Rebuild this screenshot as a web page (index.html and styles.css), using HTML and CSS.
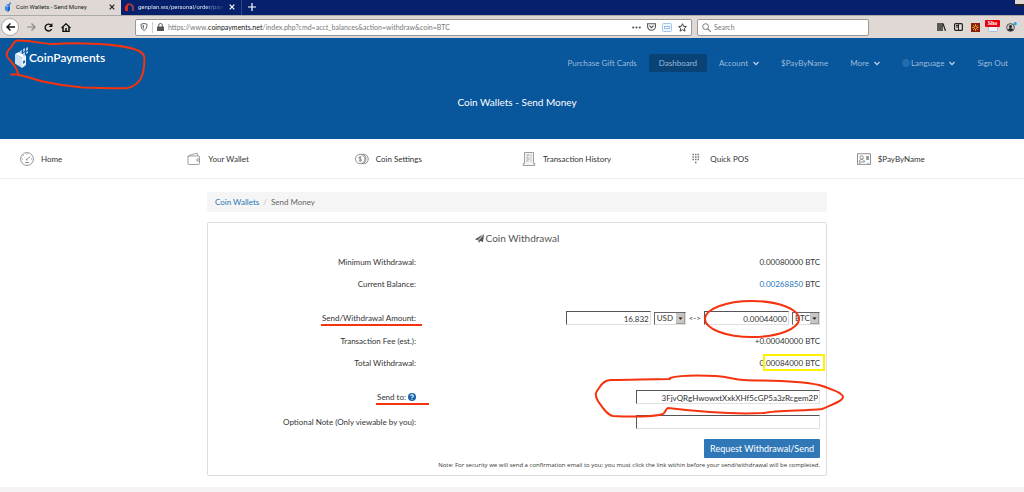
FILE: index.html
```
<!DOCTYPE html>
<html lang="en">
<head>
<meta charset="utf-8">
<title>Coin Wallets - Send Money</title>
<link rel="stylesheet" href="styles.css">
</head>
<body>
<div class="tabs">
  <div class="tab tab-active">
    <svg class="ic" width="8" height="10" viewBox="0 0 8 10"><path d="M1 4l3 1v5L1 8z" fill="#3b8be8"/><path d="M4 5l2-1v4l-2 2z" fill="#1b5fc0"/><path d="M2 3l3-1 1-2 1 1-2 4z" fill="#2f7be0"/></svg>
    <span class="tab-name">Coin Wallets - Send Money</span>
    <button class="tab-x" aria-label="Close tab"><svg width="6" height="6" viewBox="0 0 6 6"><path d="M.7.7l4.6 4.6M5.3.7L.7 5.3" stroke="#222" stroke-width="1.2"/></svg></button>
  </div>
  <div class="tab tab-other">
    <svg class="ic" width="9" height="8" viewBox="0 0 9 8"><path d="M0 8V3.500L2.500.5H5L3 3.500V8z" fill="#e3261b"/><path d="M4 .5h2.500L9 3v5H7V4L5 2.500z" fill="#8d3b50"/></svg>
    <span class="tab-name">genplan.ws/personal/order/paym</span>
    <button class="tab-x" aria-label="Close tab"><svg width="6" height="6" viewBox="0 0 6 6"><path d="M.7.7l4.6 4.6M5.3.7L.7 5.3" stroke="#fff" stroke-width="1.2"/></svg></button>
  </div>
  <button class="tab-new" aria-label="New tab"><svg width="8" height="8" viewBox="0 0 8 8"><path d="M4 0v8M0 4h8" stroke="#fff" stroke-width="1.2"/></svg></button>
  <button class="win-min" aria-label="Minimize"></button>
</div>
<div class="toolbar">
  <div class="nav-btns">
    <button class="back" aria-label="Back"><svg width="9" height="8" viewBox="0 0 9 8"><path d="M9 4H1M4.500.5L1 4l3.500 3.500" fill="none" stroke="#111" stroke-width="1.400"/></svg></button>
    <button aria-label="Forward"><svg width="9" height="8" viewBox="0 0 9 8"><path d="M0 4h8M4.500.5L8 4 4.500 7.500" fill="none" stroke="#888" stroke-width="1.200"/></svg></button>
    <button aria-label="Reload"><svg width="9" height="9" viewBox="0 0 9 9"><path d="M7 2.200A3.400 3.400 0 1 0 7.600 6" fill="none" stroke="#111" stroke-width="1.400"/><path d="M8.500 0v4H4.700z" fill="#111"/></svg></button>
    <button aria-label="Home"><svg width="10" height="9" viewBox="0 0 10 9"><path d="M.5 5L5 .7 9.500 5" fill="none" stroke="#111" stroke-width="1.200"/><path d="M2 4v4.400h6V4M5 8V5" fill="none" stroke="#111" stroke-width="1.500"/></svg></button>
  </div>
  <div class="urlbar">
    <svg width="8" height="8" viewBox="0 0 8 8"><path d="M4 .5l3 .7c0 3-.5 5-3 6.300C1.500 6.200 1 4.200 1 1.200z" fill="none" stroke="#666"/><path d="M4 2v4C2.700 5 2.400 4 2.400 2.400z" fill="#777"/></svg>
    <span class="sep"></span>
    <svg width="7" height="8" viewBox="0 0 7 8"><rect y="3.500" width="7" height="4.500" rx=".6" fill="#555"/><path d="M1.700 4V2.300a1.800 1.800 0 0 1 3.600 0V4" fill="none" stroke="#555"/></svg>
    <span class="url">https://www.<b>coinpayments.net</b>/index.php?cmd=acct_balances&amp;action=withdraw&amp;coin=BTC</span>
    <svg width="9" height="3" viewBox="0 0 9 3"><g fill="#555"><circle cx="1.200" cy="1.500" r="1.100"/><circle cx="4.500" cy="1.500" r="1.100"/><circle cx="7.800" cy="1.500" r="1.100"/></g></svg>
    <svg class="gap" width="9" height="8" viewBox="0 0 9 8"><path d="M.6.7h7.800v2.800c0 5-7.800 5-7.800 0z" fill="none" stroke="#555" stroke-width="1.100"/><path d="M2.500 2.600l2 2 2-2" fill="none" stroke="#555" stroke-width="1.200"/></svg>
    <svg class="gap" width="10" height="9" viewBox="0 0 10 9"><rect x=".5" y=".5" width="9" height="8" rx="1" fill="#eef5fd" stroke="#a4c4ee"/><rect x="2.500" y="3.500" width="5" height="2" fill="#fff" stroke="#86aee0" stroke-width=".8"/></svg>
    <svg class="gap" width="9" height="9" viewBox="0 0 9 9"><path d="M4.500.7l1.100 2.600 2.800.2-2.100 1.900.7 2.800-2.500-1.500L2 8.200l.7-2.800L.6 3.500l2.800-.2z" fill="none" stroke="#444"/></svg>
  </div>
  <label class="search">
    <svg width="9" height="9" viewBox="0 0 9 9"><circle cx="3.600" cy="3.600" r="2.900" fill="none" stroke="#777"/><path d="M5.700 5.700l3 3" stroke="#777" stroke-width="1.200"/></svg>
    <input type="search" placeholder="Search" aria-label="Search">
  </label>
  <div class="tools">
    <svg width="9" height="8" viewBox="0 0 9 8"><path d="M1 0v8M3 0v8M5 0v8" stroke="#222" stroke-width="1.400"/><path d="M6 .5L8.500 8" stroke="#222" stroke-width="1.200"/></svg>
    <svg width="9" height="8" viewBox="0 0 9 8"><rect x=".6" y=".6" width="7.800" height="6.800" rx="1" fill="none" stroke="#222" stroke-width="1.200"/><path d="M2 2.500h2M2 4h2M4.500 1v6" stroke="#222"/></svg>
    <svg width="9" height="9" viewBox="0 0 9 9"><rect width="9" height="9" fill="#8b1d10"/><path d="M4.500 1v7M1 4.500h7M2 2l5 5M7 2L2 7" stroke="#c98a20"/><circle cx="4.500" cy="4.500" r="1.500" fill="#8b1d10" stroke="#e5b12c" stroke-width=".7"/></svg>
    <span class="mailbox"><svg width="10" height="9" viewBox="0 0 10 9"><rect x=".5" y=".5" width="9" height="8" rx="1" fill="#eef3fa" stroke="#a9bede"/></svg><span class="flag">Sho</span></span>
    <svg width="11" height="10" viewBox="0 0 11 10"><circle cx="4.500" cy="5.500" r="3.900" fill="#ccc" stroke="#333" stroke-width=".8"/><circle cx="4.500" cy="4.400" r="1.500" fill="#222"/><path d="M1.800 8c.5-2.500 5-2.500 5.400 0-1.500 1.400-4 1.400-5.400 0z" fill="#222"/><circle cx="9.200" cy="1.700" r="1.600" fill="#18a8ef"/></svg>
  </div>
</div>

<header class="hero">
  <div class="hero-top">
    <a class="logo" href="#">
      <svg width="14" height="21" viewBox="0 0 14 21"><path d="M0 7l7 3.500V21L0 16.500z" fill="#c9dff4"/><path d="M0 7l4-2 7 4-4 1.500z" fill="#fff"/><path d="M7 10.500l4-2v9.500L7 21z" fill="#eaf3fc"/><path d="M8 14l2-.8v2.500l-2 1z" fill="#1c5fa5"/><path d="M5 4l2-1v3l-2 1zM8 2l2-1v3l-2 1zM11 1l2-1v3l-2 1zM8 6l2-1v3l-2 1zM11 5l2-1v2l-2 1z" fill="#a9cbed"/></svg>
      <span>CoinPayments</span>
    </a>
    <nav class="menu">
      <a href="#">Purchase Gift Cards</a>
      <a class="on" href="#">Dashboard</a>
      <a href="#">Account <svg width="6" height="5" viewBox="0 0 6 5"><path d="M.5 1L3 3.700 5.500 1" fill="none" stroke="#c3d6ea" stroke-width="1.200"/></svg></a>
      <a href="#">$PayByName</a>
      <a href="#">More <svg width="6" height="5" viewBox="0 0 6 5"><path d="M.5 1L3 3.700 5.500 1" fill="none" stroke="#c3d6ea" stroke-width="1.200"/></svg></a>
      <a class="lang" href="#"><svg width="8" height="8" viewBox="0 0 8 8"><path d="M.5 4a3.500 3.500 0 1 0 7 0 3.500 3.500 0 1 0-7 0M4 .5v7M.5 4h7M1 2.200h6M1 5.800h6M4 .5c-2.300 2-2.300 5 0 7 2.300-2 2.300-5 0-7" fill="none" stroke="#347ab4" stroke-width=".7"/></svg>Language <svg width="6" height="5" viewBox="0 0 6 5"><path d="M.5 1L3 3.700 5.500 1" fill="none" stroke="#c3d6ea" stroke-width="1.200"/></svg></a>
      <a href="#">Sign Out</a>
    </nav>
  </div>
  <h1>Coin Wallets - Send Money</h1>
</header>

<nav class="sections">
  <a href="#"><svg width="14" height="14" viewBox="0 0 14 14"><g fill="none" stroke="#777" stroke-width=".8"><circle cx="7" cy="7" r="6.400"/><path d="M6 7.800L10.500 4.500M6 7.800l1.500.2M7 1.500v1M2 7h1M3.300 3.300l.7.7M11 7h1M5 10.500h4"/></g></svg>Home</a>
  <a href="#"><svg width="14" height="14" viewBox="0 0 14 14"><g fill="none" stroke="#888" stroke-width=".8"><rect x="1" y="4" width="11.500" height="8.500" rx="1"/><path d="M1 5c0-1 1-1.500 2-1.800L10 1.200l1 2.800M12.500 7H10v2h2.500"/></g></svg>Your Wallet</a>
  <a href="#"><svg width="14" height="14" viewBox="0 0 14 14"><g fill="none" stroke="#777" stroke-width=".8"><circle cx="5.200" cy="7" r="4.700"/><path d="M6.500 2.200c6 0 6 9.600 0 9.600M8.500 2.200c6.300 0 6.300 9.600 0 9.600M6.500 5.300c-1-.8-2.700-.5-2.700.6 0 1.400 2.800.8 2.800 2.200 0 1-1.800 1.300-2.900.4M5.200 4v6"/></g></svg>Coin Settings</a>
  <a href="#"><svg width="14" height="14" viewBox="0 0 14 14"><path d="M2.500.5h9v11h1.300v2H1.200v-2h1.300z" fill="#f3f3f3" stroke="#888" stroke-width=".8"/><path d="M4.500 3h3M4.500 5h2M4.500 7h3M4.500 9h2M8.500 3h1M8.500 5h1M8.500 7h1M8.500 9h1" stroke="#888" stroke-width=".8"/></svg>Transaction History</a>
  <a class="pos" href="#"><svg width="8" height="12" viewBox="0 0 8 12"><path d="M.5 1.500H8M.5 4H8M.5 6.500H8M3 9.500h2" stroke="#777" stroke-width="1.300" stroke-dasharray="1.500 1"/></svg>Quick POS</a>
  <a href="#"><svg width="14" height="14" viewBox="0 0 14 14"><g fill="none" stroke="#777" stroke-width=".8"><rect x=".5" y="1.800" width="13" height="10.500"/><circle cx="4.700" cy="5.500" r="1.700"/><path d="M2 10c0-2 1.500-2 2.700-2.800C6 8 7.500 8 7.500 10zM9 5h3M9 7h3M10 4v4M11.200 4v4M2 12l1.500-1M12 12l-1.500-1"/></g></svg>$PayByName</a>
</nav>

<main class="page">
  <div class="crumbs"><a href="#">Coin Wallets</a><span class="slash">/</span><span>Send Money</span></div>
  <form class="panel">
    <h2><svg width="9" height="9" viewBox="0 0 9 9"><path d="M9 0L8 8 5.300 7 4 9 3.300 6.300z" fill="#555"/><path d="M8.500.2L0 5.200l2.500 1z" fill="#555"/><path d="M8.500.5L4 6.500" stroke="#ddd" stroke-width=".5"/></svg>Coin Withdrawal</h2>
    <div class="row"><span>Minimum Withdrawal:</span><span class="val">0.00080000 BTC</span></div>
    <div class="row"><span>Current Balance:</span><span class="val"><a href="#">0.00268850</a> BTC</span></div>
    <div class="row group"><label for="amt">Send/Withdrawal Amount:</label>
      <div class="val amounts">
        <input id="amt" class="num" type="text" value="16.832">
        <span class="pick"><select aria-label="Currency"><option>USD</option></select><svg width="9" height="11" viewBox="0 0 9 11"><path d="M0 0h9v11H0z" fill="#c9c5c0"/><path d="M0 11h9V0" fill="none" stroke="#777"/><path d="M2.500 4.500h4L4.500 6.800z" fill="#111"/></svg></span>
        <span class="arrows">&lt;-&gt;</span>
        <input class="num" type="text" value="0.00044000" aria-label="Coin amount">
        <span class="pick pick-coin"><select aria-label="Coin"><option>BTC</option></select><svg width="9" height="11" viewBox="0 0 9 11"><path d="M0 0h9v11H0z" fill="#c9c5c0"/><path d="M0 11h9V0" fill="none" stroke="#777"/><path d="M2.500 4.500h4L4.500 6.800z" fill="#111"/></svg></span>
      </div></div>
    <div class="row"><span>Transaction Fee (est.):</span><span class="val">+0.00040000 BTC</span></div>
    <div class="row"><span>Total Withdrawal:</span><span class="val">0.00084000 BTC</span></div>
    <div class="row group"><label for="to">Send to: <svg class="help" width="8" height="8" viewBox="0 0 8 8"><circle cx="4" cy="4" r="4" fill="#1a66ac"/><path d="M2.700 3c.1-1.700 2.700-1.500 2.600 0C5.200 3.900 4 3.800 4 5M4 5.700v1" fill="none" stroke="#fff" stroke-width="1.100"/></svg></label><div class="val"><input id="to" class="wide" type="text" value="3FjvQRgHwowxtXxkXHf5cGP5a3zRcgem2P"></div></div>
    <div class="row tall"><label for="note">Optional Note (Only viewable by you):</label><div class="val"><input id="note" class="wide" type="text"></div></div>
    <button class="send" type="button">Request Withdrawal/Send</button>
    <p class="fine">Note: For security we will send a confirmation email to you; you must click the link within before your send/withdrawal will be completed.</p>
  </form>
</main>
<footer class="foot"></footer>

<svg class="marks" width="1024" height="492" viewBox="0 0 1024 492" aria-hidden="true">
  <g fill="none" stroke="#f5330f" stroke-width="2" stroke-linecap="round" stroke-linejoin="round">
    <path d="M11 74.500h7c0-5-3-8-7-13-5-5-6-8-1-13 4-5 4-8 8-8 18 0 25 4 36 3.500 12-1 28-1 45 0 14 1 29 2 40 7 6 3 6 6 5 15-1 13-6 20-17 22-7 1-20 0-44-.5-14-1-27-3-40-6-9-2-16-5-26-7"/>
    <path d="M321 325h101M376 404h53" stroke-linecap="butt"/>
    <ellipse cx="752" cy="319" rx="47" ry="18"/>
    <path d="M670 378c10-3 24-3 46-2 14 1 18 4 28 4 25 1 52 0 75 5 13 4 24 8 24 12 0 4-12 8-21 12-18 2-45 1-58 4-20 1-55 0-96-5-2 0-2 4-5 6-9 3-34 3-50 2-6-1-11-9-15-15-4-7-2-9 1-13 3-5 6-8 12-8 20 0 38-1 59-1z"/>
  </g>
  <rect x="764" y="355" width="60" height="15" fill="none" stroke="#fdf200" stroke-width="2"/>
</svg>
</body>
</html>
```
FILE: styles.css
```
* { box-sizing: border-box; }
body { margin: 0; background: #fff; color: #333; font: 8px/12px Lato, "Liberation Sans", sans-serif; position: relative; }
a { color: inherit; text-decoration: none; }
svg { flex: none; }
button { border: 0; padding: 0; background: none; display: flex; align-items: center; justify-content: center; }
input, select { font: inherit; color: #333; border-radius: 0; }
h1, h2, p { margin: 0; font-weight: 400; }

.tabs { display: flex; height: 15px; background: #06206b; font: 6px/14px Roboto, sans-serif; }
.tab { display: flex; align-items: center; gap: 4px; padding: 0 6px 1px 4px; width: 121px; }
.tab-active { background: #dfd8d5; color: #222; }
.tab-other { color: #dde3f4; border-right: 1px solid #31468a; }
.tab-name { flex: 1; min-width: 0; white-space: nowrap; }
.tab-other .tab-name { -webkit-mask-image: linear-gradient(90deg, #000 75%, transparent); mask-image: linear-gradient(90deg, #000 75%, transparent); }
.tab-new { width: 20px; height: 13px; }
.win-min { margin-left: auto; width: 9px; height: 6px; background: #ddd8d2; border-bottom: 2px solid #222; }

.toolbar { display: flex; align-items: center; height: 23px; background: #dfd8d5; border-top: 1px solid #aaa; font: 7px/14px Lato, sans-serif; }
.nav-btns { display: flex; align-items: center; gap: 8px; width: 135px; padding-left: 1px; }
.back { width: 18px; height: 18px; border-radius: 50%; background: #fff; border: 1px solid #aaa; }
.urlbar, .search { display: flex; align-items: center; height: 17px; background: #fff; border: 1px solid #999; border-radius: 2px; padding: 0 4px; }
.urlbar { flex: 1; gap: 4px; color: #777; margin-right: 5px; }
.urlbar b { font-weight: 400; color: #111; }
.sep { width: 1px; height: 11px; background: #ccc; }
.url { flex: 1; white-space: nowrap; }
.gap { margin-left: 2px; }
.search { width: 172px; gap: 3px; }
.search input { border: 0; outline: 0; padding: 0; width: 100%; background: none; }
.search input::placeholder { color: #777; opacity: 1; }
.tools { display: flex; align-items: center; justify-content: flex-end; gap: 8px; width: 155px; padding-right: 7px; }
.mailbox { position: relative; display: flex; }
.flag { position: absolute; left: -3px; top: -3px; width: 15px; background: #e60012; color: #fff; border-radius: 1px; font: bold 6px/7px "Liberation Serif", serif; text-align: center; }

.hero { background: #08569c; color: #fff; height: 101px; }
.hero-top { display: flex; justify-content: space-between; align-items: flex-start; padding: 9px 6px 0 15px; }
.logo { display: flex; align-items: center; font-size: 12px; font-weight: 600; line-height: 21px; }
.menu { display: flex; gap: 2px; padding-top: 7px; color: #9cbbda; }
.menu a { display: flex; align-items: center; gap: 5px; height: 18px; padding: 0 10px; border-radius: 2px; white-space: nowrap; }
.menu .on { background: #094376; }
.menu .lang { gap: 1px; }
.menu .lang svg:last-child { margin-left: 4px; }
.hero h1 { font-size: 10px; line-height: 14px; text-align: center; padding: 23px 0 0 10px; }

.sections { display: grid; grid-template-columns: repeat(6, 1fr); height: 40px; padding-left: 20px; border-bottom: 1px solid #eee; }
.sections a { display: flex; align-items: center; gap: 7px; }
.sections .pos { gap: 10px; padding-left: 3px; }

.page { max-width: 630px; margin: 0 auto; padding: 13px 0 11px 10px; }
.crumbs { display: flex; gap: 4px; padding: 4px 8px; background: #f5f5f5; border-radius: 2px; color: #666; }
.crumbs a, .val a { color: #2873b7; }
.slash { color: #bbb; }
.panel { margin-top: 10px; padding: 8px 6px 4px; border: 1px solid #ddd; border-radius: 2px; }
.panel h2 { display: flex; justify-content: center; align-items: center; gap: 2px; font-size: 10px; line-height: 14px; color: #555; margin-bottom: 6px; }
.row { display: grid; grid-template-columns: 1fr 2fr; align-items: center; min-height: 22px; text-align: right; }
.group { margin-top: 11px; min-height: 24px; }
.tall { min-height: 26px; }
.group label { display: flex; align-items: center; justify-content: flex-end; gap: 2px; }
.amounts { display: flex; justify-content: flex-end; align-items: center; gap: 3px; }
.row input { height: 14px; padding: 1px 1px 0; border: 1px solid #e0e0e0; border-top-color: #555; border-left-color: #555; background: #fff; text-align: right; vertical-align: middle; }
.num { width: 85px; }
.wide { width: 184px; }
.pick { position: relative; width: 32px; height: 13px; }
.pick-coin { width: 28px; }
.pick select { display: block; appearance: none; width: 100%; height: 13px; padding: 0 0 0 2px; line-height: 11px; border: 1px solid #ddd; border-top-color: #666; border-left-color: #666; background: #fff; }
.pick svg { position: absolute; right: 1px; top: 1px; pointer-events: none; }
.send { margin: 4px 0 0 auto; height: 19px; padding: 0 6px; border-radius: 1px; background: #2f77b6; color: #fff; font: 9px/13px Lato, sans-serif; }
.fine { margin-top: 2px; font: 6px/11px "Open Sans", sans-serif; text-align: right; }
.foot { height: 5px; background: #f5f3f3; }
.marks { position: absolute; left: 0; top: 0; pointer-events: none; }
```
